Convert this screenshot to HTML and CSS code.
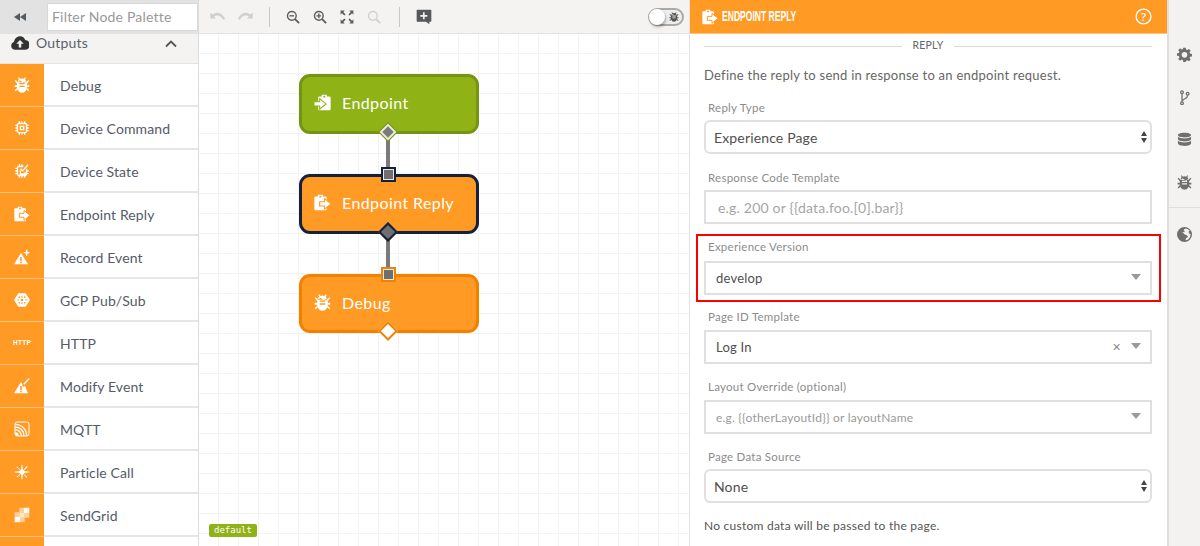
FILE: index.html
```html
<!DOCTYPE html>
<html lang="en">
<head>
<meta charset="utf-8">
<title>Endpoint Reply</title>
<link rel="stylesheet" href="styles.css">
</head>
<body>
<svg class="defs" width="0" height="0" aria-hidden="true">
  <symbol id="bug" viewBox="0 0 24 24"><path fill="currentColor" fill-rule="evenodd" d="M7.500 3 6 1.500 7.300.5 9.500 2.700a6.500 6.500 0 0 1 5 0L16.700.5 18 1.500 16.500 3A6 6 0 0 1 18 7H6a6 6 0 0 1 1.500-4ZM1 5.500l1.500-1L6 8h12l3.500-3.500L23 5.500 19.500 10v2.500H23v2.500h-3.500v1.500L23 20l-1.500 1.500-2.800-2.800A7.500 7.500 0 0 1 12 23.500a7.500 7.500 0 0 1-6.700-4.800L2.500 21.500 1 20l3.500-3.500V15H1v-2.500h3.500V10Zm7 3.500v2h8v-2Zm0-4v2h8V9.500Zm0 8v2h8v-2Z"/></symbol>
  <symbol id="chip" viewBox="0 0 24 24"><path fill="currentColor" fill-rule="evenodd" d="M7 2h2v2h2V2h2v2h2V2h2v2.200A3 3 0 0 1 19.800 7H22v2h-2.200v2H22v2h-2.200v2H22v2h-2.200a3 3 0 0 1-2.800 2.800V22h-2v-2.200h-2V22h-2v-2.200H9V22H7v-2.200A3 3 0 0 1 4.200 17H2v-2h2.200v-2H2v-2h2.200V9H2V7h2.200A3 3 0 0 1 7 4.200Zm0 4.300a1 1 0 0 0-.8.800v10c0 .4.400.8.800.8h10c.4 0 .8-.4.800-.8V7a1 1 0 0 0-.8-.8ZM8.500 8.500h7v7h-7Zm2 2v3h3v-3Z"/></symbol>
  <symbol id="chipstate" viewBox="0 0 24 24"><path fill="currentColor" fill-rule="evenodd" d="M7 2h2v2h2V2h2v2h2l-2 2.200H7a1 1 0 0 0-.8.800v10c0 .4.400.8.800.8h10c.4 0 .8-.4.800-.8V10l2-2v3H22v2h-2.200v2H22v2h-2.200a3 3 0 0 1-2.800 2.800V22h-2v-2.200h-2V22h-2v-2.200H9V22H7v-2.200A3 3 0 0 1 4.200 17H2v-2h2.200v-2H2v-2h2.200V9H2V7h2.200A3 3 0 0 1 7 4.200ZM20.500 2 22 3.500l-9 9.500-4-3.500L10.500 8l2.500 2.200ZM8.500 11h2v4.500h5V14h2v3.500h-9Z"/></symbol>
  <symbol id="reply" viewBox="0 0 24 24"><path fill="currentColor" fill-rule="evenodd" d="M.5 5a1.500 1.500 0 0 1 1.500-1.500h3.500V1h7v2.500H16A2 2 0 0 1 18 5.500V21a2 2 0 0 1-2 2H2a1.500 1.500 0 0 1-1.500-1.500ZM7.700 2.500v2.500h2.600V2.500Z"/><path fill="currentColor" stroke="#ff9a24" stroke-width="1.500" d="M8 11h7V6.500L24 14l-9 7.500V17H8Z"/></symbol>
  <symbol id="entry" viewBox="0 0 24 24"><path fill="currentColor" fill-rule="evenodd" d="M6 5a1.500 1.500 0 0 1 1.500-1.500H11V1h7v2.500h3.500A2 2 0 0 1 23.500 5.500V21a2 2 0 0 1-2 2H7.500A1.500 1.500 0 0 1 6 21.500ZM13.200 2.500v2.500h2.600V2.500Z"/><path fill="currentColor" stroke="#8fb316" stroke-width="1.500" d="M0 11h8V6.500L17 14l-9 7.500V17H0Z"/></symbol>
  <symbol id="alertplus" viewBox="0 0 24 24"><path fill="currentColor" fill-rule="evenodd" d="M10.500 6 21 23H0Zm-1.200 6v6h2.400v-6Zm0 7v2.200h2.400V19ZM18 1h2v3.500h3.500v2H20V10h-2V6.500h-3.500v-2H18Z"/></symbol>
  <symbol id="alertedit" viewBox="0 0 24 24"><path fill="currentColor" fill-rule="evenodd" d="M10.500 6 13 10l-1 1 2.500 2.500 2-2L21 23H0Zm-1.200 6v6h2.400v-6Zm0 7v2.200h2.400V19ZM22 0l1.500 1.500-8 8.500L14 8.500Z"/></symbol>
  <symbol id="gcp" viewBox="0 0 24 24"><path fill="currentColor" fill-rule="evenodd" d="M6.500 2h11L24 12l-6.500 10h-11L0 12ZM12 10a2 2 0 1 0 0 4 2 2 0 0 0 0-4Zm-.8-4.500v3h1.600v-3Zm0 10v3h1.600v-3ZM6 10.500a1.200 1.200 0 1 0 0 2.400 1.200 1.200 0 0 0 0-2.400Zm12 0a1.200 1.200 0 1 0 0 2.400 1.200 1.200 0 0 0 0-2.400ZM8 6.500A1.200 1.200 0 1 0 8 9a1.200 1.200 0 0 0 0-2.500Zm8 0A1.200 1.200 0 1 0 16 9a1.200 1.200 0 0 0 0-2.500ZM8 15a1.200 1.200 0 1 0 0 2.500A1.200 1.200 0 0 0 8 15Zm8 0a1.200 1.200 0 1 0 0 2.500 1.200 1.200 0 0 0 0-2.500Z"/></symbol>
  <symbol id="rss" viewBox="0 0 24 24"><rect x="1.500" y="1.500" width="21" height="21" rx="3.500" fill="none" stroke="currentColor" stroke-width="1.500"/><path d="M2 9a13 13 0 0 1 13 13M2 5a17 17 0 0 1 17 17M2 13a9 9 0 0 1 9 9" fill="none" stroke="currentColor" stroke-width="2"/><path fill="currentColor" d="M2 17a5 5 0 0 1 5 5H4a2 2 0 0 1-2-2Z"/></symbol>
  <symbol id="particle" viewBox="0 0 24 24"><path fill="currentColor" d="M12 6.500 17.500 12 12 17.500 6.500 12ZM11.300 1h1.400l.3 6h-2ZM11 17h2l-.3 6h-1.400ZM1 11.300 7 11v2l-6-.3ZM17 11l6 .3v1.400l-6 .3ZM4 5l1-1 4 4.500-.5.500ZM15 16l.5-.5L20 19.500l-1 1ZM19 3l1.500 1L16 9l-1-1ZM8.500 15.200l.8.800L5 20l-1-1Z"/></symbol>
  <symbol id="sendgrid" viewBox="0 0 24 24"><path fill="currentColor" opacity=".75" d="M8 8h8v8H8Z"/><path fill="currentColor" d="M15 1h8v8h-8ZM1 15h8v8H1Z" opacity=".95"/><path fill="currentColor" opacity=".55" d="M8 1h7v7H8ZM16 9h7v7h-7ZM9 16h7v7H9ZM1 8h7v7H1Z"/></symbol>
  <symbol id="gear" viewBox="0 0 24 24"><path fill="currentColor" fill-rule="evenodd" d="M10 1h4l.6 3.100 1.900.8L19.100 3l2.900 2.900-1.900 2.600.8 1.900L24 11v4l-3.100.500-.8 1.900 1.900 2.600-2.900 2.900-2.600-1.900-1.900.8L14 24h-4l-.6-3.200-1.900-.8L4.900 22 2 19l1.900-2.600-.8-1.900L0 14v-4l3.100-.5.8-1.900L2 5l2.900-2.900L7.500 4l1.900-.8ZM12 8a4.500 4.500 0 1 0 0 9 4.500 4.500 0 0 0 0-9Z"/></symbol>
  <symbol id="branch" viewBox="0 0 24 24"><g fill="none" stroke="currentColor" stroke-width="2"><circle cx="8" cy="3.500" r="2.200"/><circle cx="17" cy="6" r="2.200"/><circle cx="8" cy="21" r="2.200"/><path d="M8 5.700v13M17 8.200c0 4-3 5-5.500 6.500-2 1.200-3.500 2-3.500 4"/></g></symbol>
  <symbol id="db" viewBox="0 0 24 24"><path fill="currentColor" d="M12 1c6 0 10.500 1.500 10.500 3.800S18 8.600 12 8.600 1.500 7.100 1.500 4.800 6 1 12 1ZM1.500 7.500C3.500 9.500 8 10.200 12 10.200s8.500-.7 10.500-2.700v3.700c0 2.200-4.500 3.800-10.500 3.800S1.500 13.400 1.500 11.200Zm0 6.500c2 2 6.500 2.700 10.500 2.700s8.500-.7 10.500-2.700v3.700c0 3-4.500 4.600-10.500 4.600S1.500 20.700 1.500 17.700Z"/></symbol>
  <symbol id="globe" viewBox="0 0 24 24"><path fill="currentColor" d="M12 0a12 12 0 1 1 0 24 12 12 0 0 1 0-24ZM14 2.500l-2.500 1-1 2 2 1-1 2-2-.5-.5 1.500 1.500.5 2 2 4 1.500 1 2.500-3 2-1 2.500 1 .8A10 10 0 0 0 21.500 11l-2.500-1-.5-3 2-1A10 10 0 0 0 14 2.500Z"/></symbol>
  <symbol id="cloud" viewBox="0 0 24 18"><path fill="currentColor" fill-rule="evenodd" d="M12 0c3.500 0 6 2 7 5a6.500 6.500 0 0 1-.5 13h-13A5.500 5.500 0 0 1 4 7.300C5 3 8 0 12 0Zm0 5-5 5h3.300v5h3.400v-5H17Z"/></symbol>
  <symbol id="zoomout" viewBox="0 0 24 24"><g fill="none" stroke="currentColor"><circle cx="10" cy="10" r="7.500" stroke-width="2.400"/><path d="m15.500 15.500 7 7" stroke-width="3.200"/><path d="M6 10h8" stroke-width="2.400"/></g></symbol>
  <symbol id="zoomin" viewBox="0 0 24 24"><g fill="none" stroke="currentColor"><circle cx="10" cy="10" r="7.500" stroke-width="2.400"/><path d="m15.500 15.500 7 7" stroke-width="3.200"/><path d="M6 10h8M10 6v8" stroke-width="2.400"/></g></symbol>
  <symbol id="zoomreset" viewBox="0 0 24 24"><g fill="none" stroke="currentColor"><circle cx="10" cy="10" r="7.500" stroke-width="2.400"/><path d="m15.500 15.500 7 7" stroke-width="3.200"/></g></symbol>
  <symbol id="fit" viewBox="0 0 24 24"><path fill="currentColor" d="M1 1h7L5.700 3.300 9.500 7.500 7.500 9.500 3.300 5.700 1 8Zm22 0v7l-2.300-2.300-4.200 3.800-2-2 3.800-4.200L16 1ZM1 23v-7l2.300 2.300 4.200-3.800 2 2-3.800 4.200L8 23Zm22 0h-7l2.300-2.300-3.800-4.200 2-2 4.200 3.800L23 16Z"/></symbol>
  <symbol id="undo" viewBox="0 0 24 14"><path fill="currentColor" d="M0 1v9h9L6 7c4-3 10-2.500 14 5l3-1C20 2 11 -2 4 3.500Z"/></symbol>
  <symbol id="redo" viewBox="0 0 24 14"><path fill="currentColor" d="M24 1v9h-9l3-3c-4-3-10-2.500-14 5L1 11C4 2 13-2 20 3.500Z"/></symbol>
  <symbol id="comment" viewBox="0 0 24 24"><path fill="currentColor" fill-rule="evenodd" d="M2 1h20a1 1 0 0 1 1 1v16a1 1 0 0 1-1 1h-2v4l-5-4H2a1 1 0 0 1-1-1V2a1 1 0 0 1 1-1Zm8.500 4v4h-4v2.500h4v4H13v-4h4V9h-4V5Z"/></symbol>
</svg>

<div class="app">
  <aside class="palette">
    <div class="palette-top">
      <button class="collapse" type="button" aria-label="Collapse"><svg viewBox="0 0 12 8"><path fill="currentColor" d="M6 0v8L0 4Zm6 0v8L6 4Z"/></svg></button>
      <div class="filter">Filter Node Palette</div>
    </div>
    <div class="group-head">
      <svg class="cloud"><use href="#cloud"/></svg>
      <span class="group-name">Outputs</span>
      <svg class="chev" viewBox="0 0 12 8"><path d="M1 6.500 6 1.500l5 5" fill="none" stroke="currentColor" stroke-width="1.800"/></svg>
    </div>
    <ul class="nodes">
      <li class="node-item"><span class="tile"><svg><use href="#bug"/></svg></span><span class="node-name">Debug</span></li>
      <li class="node-item"><span class="tile"><svg><use href="#chip"/></svg></span><span class="node-name">Device Command</span></li>
      <li class="node-item"><span class="tile"><svg><use href="#chipstate"/></svg></span><span class="node-name">Device State</span></li>
      <li class="node-item"><span class="tile"><svg><use href="#reply"/></svg></span><span class="node-name">Endpoint Reply</span></li>
      <li class="node-item"><span class="tile"><svg><use href="#alertplus"/></svg></span><span class="node-name">Record Event</span></li>
      <li class="node-item"><span class="tile"><svg><use href="#gcp"/></svg></span><span class="node-name">GCP Pub/Sub</span></li>
      <li class="node-item"><span class="tile tile-text">HTTP</span><span class="node-name">HTTP</span></li>
      <li class="node-item"><span class="tile"><svg><use href="#alertedit"/></svg></span><span class="node-name">Modify Event</span></li>
      <li class="node-item"><span class="tile"><svg><use href="#rss"/></svg></span><span class="node-name">MQTT</span></li>
      <li class="node-item"><span class="tile"><svg><use href="#particle"/></svg></span><span class="node-name">Particle Call</span></li>
      <li class="node-item"><span class="tile"><svg><use href="#sendgrid"/></svg></span><span class="node-name">SendGrid</span></li>
      <li class="node-item"><span class="tile"></span><span class="node-name"></span></li>
    </ul>
  </aside>

  <main class="workspace">
    <div class="toolbar">
      <svg class="tool tool-undo off"><use href="#undo"/></svg>
      <svg class="tool tool-undo off"><use href="#redo"/></svg>
      <span class="tool-sep"></span>
      <svg class="tool tool-zoom"><use href="#zoomout"/></svg>
      <svg class="tool tool-zoom"><use href="#zoomin"/></svg>
      <svg class="tool tool-zoom"><use href="#fit"/></svg>
      <svg class="tool tool-zoom off"><use href="#zoomreset"/></svg>
      <span class="tool-sep"></span>
      <svg class="tool tool-comment"><use href="#comment"/></svg>
      <span class="toolbar-fill"></span>
      <span class="toggle"><span class="knob"></span><svg class="toggle-bug"><use href="#bug"/></svg></span>
    </div>
    <div class="stage">
      <div class="wire wire-a"></div>
      <div class="wire wire-b"></div>

      <div class="flow-node green n1"><svg class="flow-icon"><use href="#entry"/></svg><span>Endpoint</span></div>
      <div class="flow-node orange selected n2"><svg class="flow-icon"><use href="#reply"/></svg><span>Endpoint Reply</span></div>
      <div class="flow-node orange debug n3"><svg class="flow-icon"><use href="#bug"/></svg><span>Debug</span></div>

      <span class="port-out p1"></span>
      <span class="port-in p2"><i></i></span>
      <span class="port-out p3"></span>
      <span class="port-in p4"><i></i></span>
      <span class="port-end p5"></span>

      <span class="tag">default</span>
    </div>
  </main>

  <section class="panel">
    <header class="panel-head">
      <svg class="panel-icon"><use href="#reply"/></svg>
      <h1 class="panel-title">ENDPOINT REPLY</h1>
      <svg class="help" viewBox="0 0 18 18"><circle cx="9" cy="9" r="7.800" fill="none" stroke="currentColor" stroke-width="1.500"/><text x="9" y="13.500" text-anchor="middle" class="help-q">?</text></svg>
    </header>
    <div class="panel-body">
      <div class="divider"><span>REPLY</span></div>
      <p class="intro">Define the reply to send in response to an endpoint request.</p>

      <div class="field">
        <label class="field-label">Reply Type</label>
        <div class="control native">Experience Page<span class="updown"><i></i><i></i></span></div>
      </div>
      <div class="field">
        <label class="field-label">Response Code Template</label>
        <div class="control text placeholder">e.g. 200 or {{data.foo.[0].bar}}</div>
      </div>
      <div class="field highlighted">
        <label class="field-label">Experience Version</label>
        <div class="control combo"><span class="value">develop</span><span class="caret"></span></div>
      </div>
      <div class="field tall">
        <label class="field-label">Page ID Template</label>
        <div class="control combo"><span class="value">Log In</span><span class="clear">×</span><span class="caret"></span></div>
      </div>
      <div class="field tall">
        <label class="field-label">Layout Override (optional)</label>
        <div class="control combo"><span class="value placeholder small">e.g. {{otherLayoutId}} or layoutName</span><span class="caret"></span></div>
      </div>
      <div class="field source">
        <label class="field-label">Page Data Source</label>
        <div class="control native">None<span class="updown"><i></i><i></i></span></div>
      </div>
      <p class="note">No custom data will be passed to the page.</p>
    </div>
  </section>

  <nav class="rail">
    <svg class="rail-icon"><use href="#gear"/></svg>
    <svg class="rail-icon"><use href="#branch"/></svg>
    <svg class="rail-icon"><use href="#db"/></svg>
    <svg class="rail-icon"><use href="#bug"/></svg>
    <span class="rail-sep"></span>
    <svg class="rail-icon"><use href="#globe"/></svg>
  </nav>
</div>
</body>
</html>
```

FILE: styles.css
```css
* { box-sizing: border-box; }
html, body { margin: 0; height: 546px; overflow: hidden; }
body { font-family: Lato, "Noto Sans", sans-serif; color: #555a66; background: #fff; }
.defs { position: absolute; }
.app { display: flex; height: 546px; overflow: hidden; }

/* palette */
.palette { width: 199px; flex: none; border-right: 1px solid #dcdcdc; background: #fff; overflow: hidden; }
.palette-top { height: 34px; background: #e2e2e2; display: flex; align-items: center; }
.collapse { width: 47px; flex: none; height: 34px; padding: 0 7px 0 0; border: 0; background: none; color: #555a60; display: flex; align-items: center; justify-content: center; }
.collapse svg { width: 12px; height: 8px; }
.filter { width: 151px; height: 28px; margin-top: -1px; border: 1px solid #d8d8d8; background: #fff; color: #999; font-size: 14px; line-height: 26px; padding-left: 4px; letter-spacing: .2px; white-space: nowrap; }
.group-head { height: 30px; background: #f4f3f2; border-bottom: 1px solid #e4e4e4; display: flex; align-items: flex-start; position: relative; }
.cloud { width: 18px; height: 14px; margin: 2px 0 0 11px; color: #333; }
.group-name { font-size: 14px; line-height: 17px; margin-left: 7px; color: #5b5f6b; letter-spacing: .2px; }
.chev { width: 12px; height: 8px; margin: 6px 21px 0 auto; color: #555; }
.nodes { list-style: none; margin: 0; padding: 0; }
.node-item { height: 43px; display: flex; align-items: center; border-bottom: 2px solid #e6e6e6; }
.tile { width: 44px; height: 43px; margin-bottom: -2px; flex: none; background: #ff9a24; color: #fff; display: flex; align-items: center; justify-content: center; border-bottom: 1px solid #ffc37c; }
.tile svg { width: 16px; height: 16px; }
.tile-text { font: bold 6.500px/1 "Liberation Sans", sans-serif; letter-spacing: .3px; }
.node-name { margin: 2px 0 0 16px; font-size: 14px; color: #555a69; letter-spacing: .1px; white-space: nowrap; }

/* workspace */
.workspace { width: 491px; flex: none; display: flex; flex-direction: column; border-right: 1px solid #e3e3e3; }
.toolbar { height: 34px; flex: none; background: #f4f3f2; border-bottom: 1px solid #e4e4e4; display: flex; align-items: center; padding-left: 11px; color: #5c5f62; }
.tool.off { color: #d0d0d0; }
.tool-undo { width: 16px; height: 9px; margin-right: 11px; }
.tool-sep { width: 1px; height: 20px; background: #c8c8c8; margin: 0 16px 0 5px; }
.tool-zoom { width: 14px; height: 14px; margin-right: 13px; }
.tool-zoom.off { margin-right: 13px; }
.tool-comment { width: 16px; height: 16px; color: #55585c; }
.toolbar-fill { flex: 1; }
.toggle { width: 36px; height: 18px; margin-right: 5px; border-radius: 9px; background: #eee; border: 2px solid #aaa; position: relative; display: block; }
.knob { position: absolute; left: -1px; top: -1px; width: 16px; height: 16px; border-radius: 50%; background: #fff; box-shadow: 1px 2px 3px rgba(0,0,0,.3); }
.toggle-bug { position: absolute; right: 3px; top: 2px; width: 10px; height: 10px; color: #555; }
.stage { flex: 1; position: relative; background-color: #fff;
  background-image: linear-gradient(to right, transparent 19px, #f3f3f3 19px), linear-gradient(to bottom, transparent 19px, #f3f3f3 19px);
  background-size: 20px 20px; }

.flow-node { position: absolute; left: 100px; width: 180px; height: 60px; border: 3px solid; border-radius: 11px; display: flex; align-items: center; padding-bottom: 3px; color: #fff; font-size: 16px; letter-spacing: .4px; white-space: nowrap; }
.flow-node span { margin-left: 11px; }
.flow-icon { width: 17px; height: 17px; margin-left: 12px; flex: none; }
.green { background: #8fb316; border-color: #749414; }
.orange { background: #ff9a24; }
.selected { border-color: #14213d; }
.debug { border-color: #f08200; }
.n1 { top: 40px; }
.n2 { top: 140px; }
.n3 { top: 240px; height: 59px; }

.wire { position: absolute; left: 187px; width: 4px; background: #7a7a7a; }
.wire-a { top: 100px; height: 40px; }
.wire-b { top: 200px; height: 40px; }
.port-out, .port-end { position: absolute; left: 182px; width: 14px; height: 14px; transform: rotate(45deg); border: 2px solid; }
.p1 { background: #7a7a7a; border-color: #e9eed3; box-shadow: 0 0 0 1px #749414; width: 12px; height: 12px; left: 183px; top: 92px; }
.p3 { top: 191px; background: #6f6f6f; border-color: #14213d; }
.p5 { top: 290px; background: #fff; border-color: #f08200; }
.port-in { position: absolute; left: 182px; width: 15px; height: 15px; border: 2px solid; background: #e8e8e8; padding: 1px; }
.port-in i { display: block; width: 9px; height: 9px; background: #6f6f6f; }
.p2 { top: 133px; border-color: #14213d; }
.p4 { top: 233px; border-color: #f08200; }

.tag { position: absolute; left: 10px; top: 490px; height: 13px; width: 48px; text-align: center; border-radius: 2px; background: #8fb316; color: #fff; font: 9px/13px "DejaVu Sans Mono", monospace; }

/* panel */
.panel { width: 477px; flex: none; background: #fff; display: flex; flex-direction: column; }
.panel-head { height: 34px; flex: none; background: #ff9a24; color: #fff; display: flex; align-items: center; padding-left: 12px; border-bottom: 1px solid #ffc37c; }
.panel-icon { width: 16px; height: 16px; flex: none; }
.panel-title { margin: 0 0 0 4px; width: 120px; flex: none; font: bold 14.500px/1 "Liberation Sans", sans-serif; letter-spacing: 0; white-space: nowrap; transform: scaleX(.59); transform-origin: left center; }
.help { width: 17px; height: 17px; margin-left: auto; margin-right: 15px; }
.help-q { font: 500 12px "Noto Sans", sans-serif; fill: #fff; }
.panel-body { padding: 0 15px 0 14px; }
.divider { height: 24px; display: flex; align-items: center; color: #666; font-size: 10.500px; letter-spacing: .2px; }
.divider::before, .divider::after { content: ""; flex: 1; height: 1px; background: #d9d9d9; }
.divider span { padding: 0 11px; margin-top: -3px; }
.intro { margin: 7px 0 0; height: 20px; font-size: 13px; line-height: 20px; color: #666; letter-spacing: .25px; white-space: nowrap; }
.field { margin-top: 16px; }
.field + .field { margin-top: 17px; }
.field-label { display: block; height: 19px; padding-left: 4px; font-size: 11.500px; line-height: 14px; color: #8c8c8c; letter-spacing: .25px; }
.control { height: 34px; border: 2px solid #e0e0e0; background: #fff; display: flex; align-items: center; color: #4f4f4f; font-size: 13px; letter-spacing: .2px; white-space: nowrap; }
.native { border-radius: 6px; padding-left: 8px; font-size: 14px; position: relative; letter-spacing: .15px; }
.text { padding-left: 12px; font-size: 14px; }
.placeholder { color: #a6a6a6; }
.placeholder.small { font-size: 12px; color: #9a9a9a; }
.updown { margin-left: auto; margin-right: 3px; display: flex; flex-direction: column; gap: 2px; }
.updown i { display: block; width: 0; height: 0; border-left: 3.500px solid transparent; border-right: 3.500px solid transparent; }
.updown i:first-child { border-bottom: 5px solid #444; }
.updown i:last-child { border-top: 5px solid #444; }
.combo { padding: 0 9px 0 10px; }
.value { flex: 1; }
.clear { font-size: 14px; color: #888; margin-right: 10px; font-family: "Liberation Sans", sans-serif; }
.caret { width: 0; height: 0; border-left: 5.500px solid transparent; border-right: 5.500px solid transparent; border-top: 6px solid #9a9a9a; margin-top: -2px; }
.field + .highlighted { margin: 10px -9px 0 -8px; padding: 4px 7px 5px 6px; border: 2px solid #f00; height: 68px; }
.highlighted .field-label { height: 21px; }
.field + .field.tall { margin-top: 16px; }
.field.tall .field-label { height: 20px; }
.highlighted + .field.tall { margin-top: 8px; }
.field + .field.source { margin-top: 16px; }
.note { margin: 14px 0 0; font-size: 12px; line-height: 18px; color: #555; letter-spacing: .25px; white-space: nowrap; }

/* rail */
.rail { flex: 1; background: #f3f2f1; border-left: 2px solid #dedede; display: flex; flex-direction: column; align-items: center; padding-top: 47px; color: #6f6f6f; }
.rail-icon { width: 15px; height: 15px; flex: none; margin-bottom: 27.500px; }
.rail-sep { display: block; width: 100%; height: 1px; background: #dedede; margin: -10px 0 19px; }
```
